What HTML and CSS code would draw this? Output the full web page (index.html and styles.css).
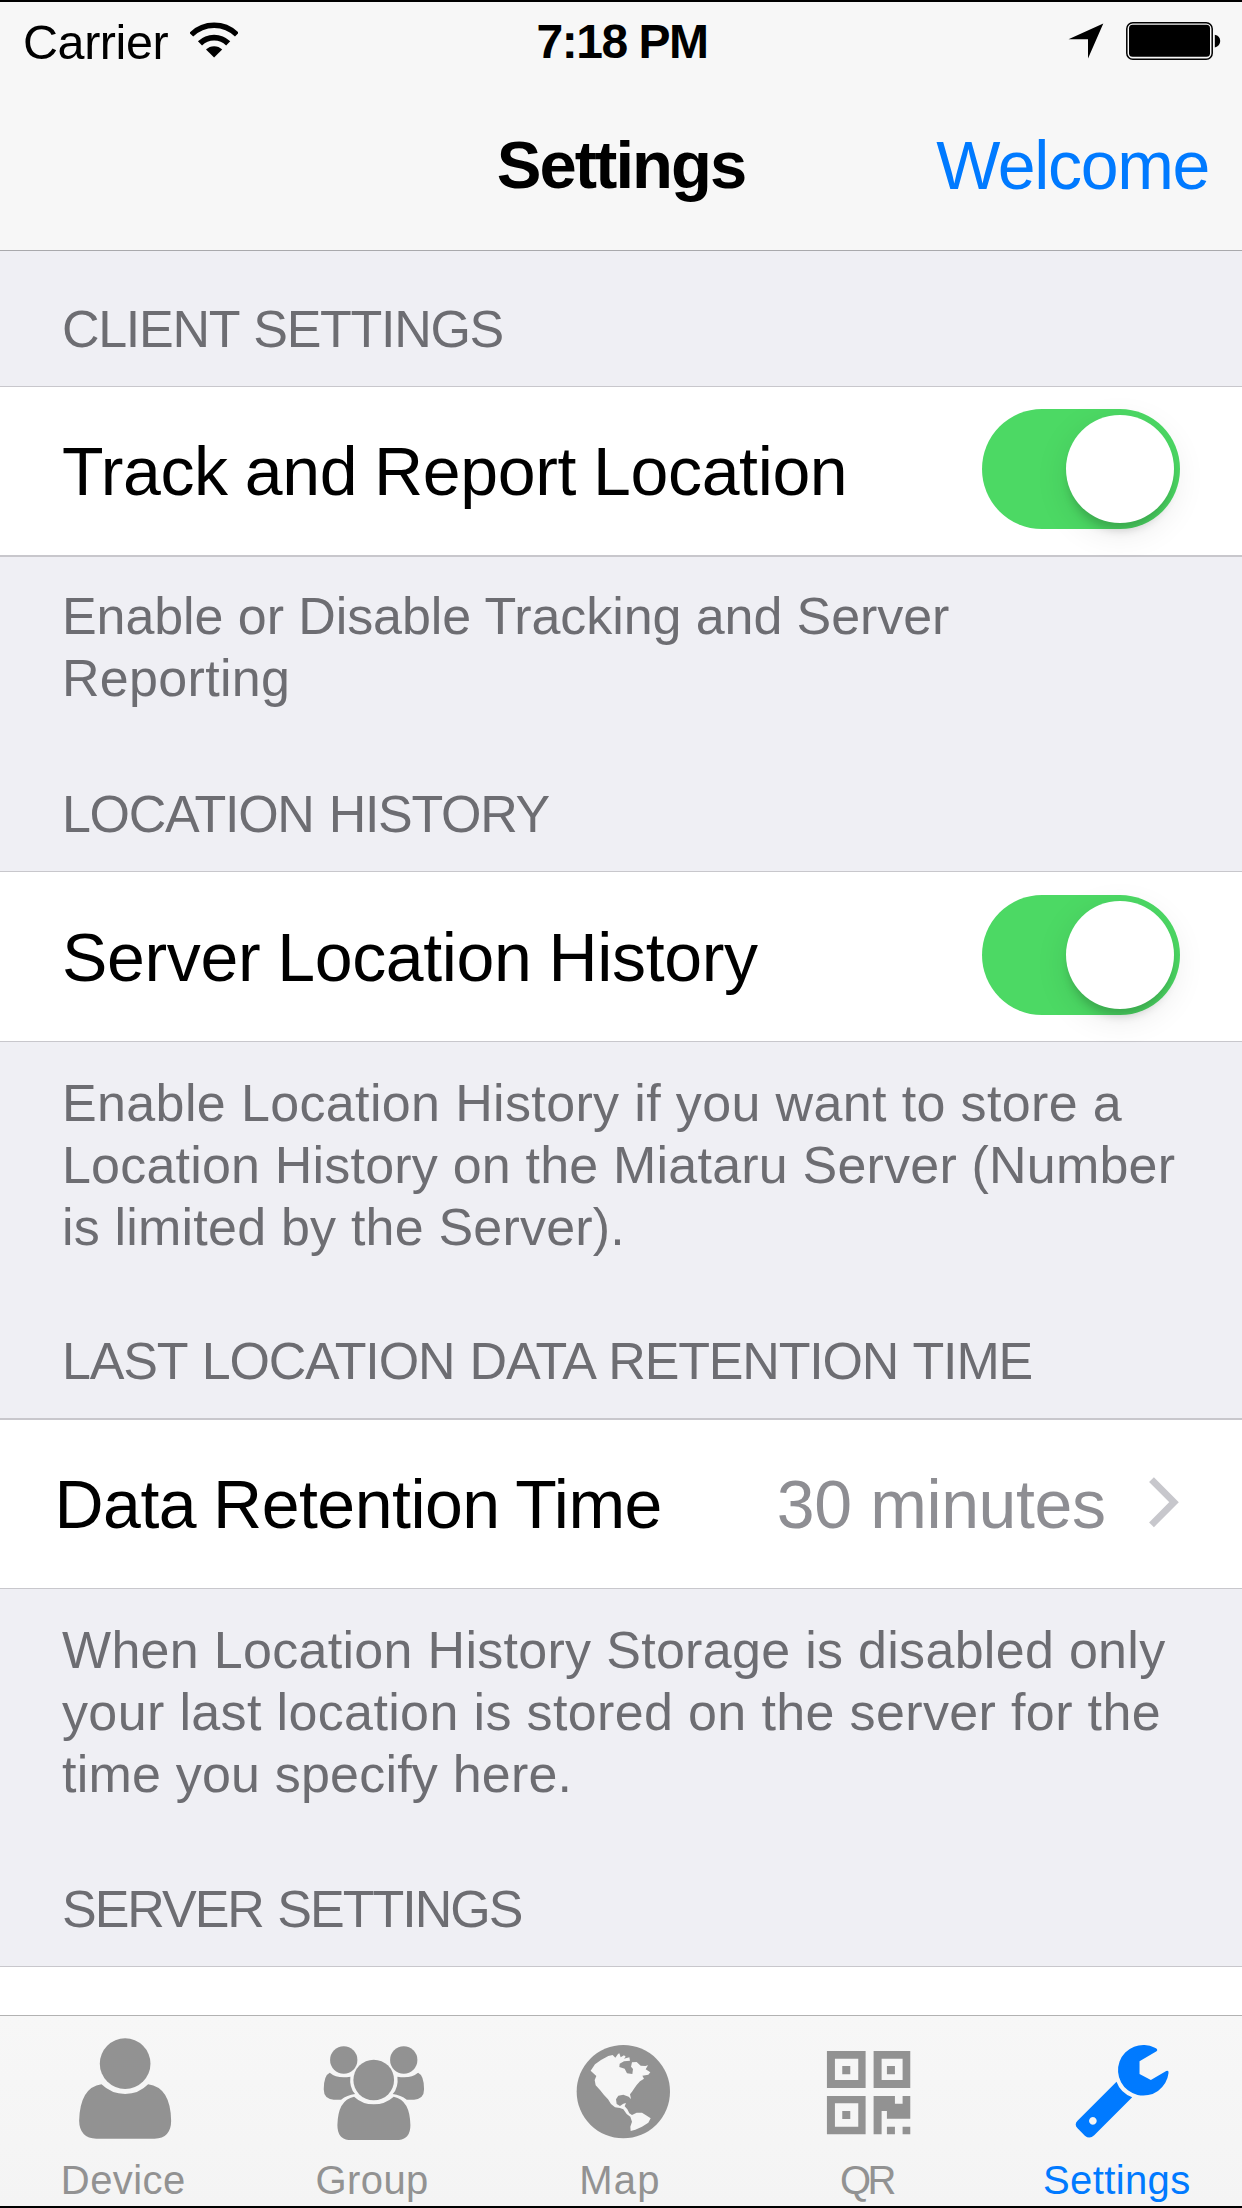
FILE: index.html
```
<!DOCTYPE html>
<html lang="en">
<head>
<meta charset="utf-8">
<title>Settings</title>
<link rel="stylesheet" href="styles.css">
</head>
<body>
<div class="screen">
  <header class="top">
    <div class="status">
      <div class="status-left">
        <span class="carrier">Carrier</span>
        <svg class="wifi" viewBox="0 0 48 36" width="48" height="36">
          <path d="M1.4 12.7A32.2 32.2 0 0 1 47 12.7" transform="translate(-.1 0)" fill="none" stroke="#000" stroke-width="5.4"/>
          <path d="M10 21.4A20 20 0 0 1 38.2 21.4" fill="none" stroke="#000" stroke-width="5.8"/>
          <path d="M16 27.6A11.5 11.5 0 0 1 32.2 27.6L24.1 35.6Z"/>
        </svg>
      </div>
      <span class="clock">7:18 PM</span>
      <div class="status-right">
        <svg viewBox="0 0 36 36" width="36" height="36"><path d="M35.3 0.5L20 35.5V16.3H0.5Z"/></svg>
        <svg viewBox="0 0 95 38" width="95" height="38">
          <rect x="0.8" y="0.8" width="85.4" height="36.4" rx="6" fill="none" stroke="#000" stroke-width="1.5"/>
          <rect x="3" y="2.8" width="81" height="32" rx="3.5"/>
          <path d="M88.8 12.8Q94.2 14 94.2 19T88.8 25.4Z"/>
        </svg>
      </div>
    </div>
    <nav class="nav">
      <h1 class="title">Settings</h1>
      <a class="welcome">Welcome</a>
    </nav>
  </header>

  <main class="list">
    <h2 class="section">Client Settings</h2>
    <div class="row row-first">
      <span class="label track">Track and Report Location</span>
      <span class="switch"><span class="knob"></span></span>
    </div>
    <p class="note note-first"><span class="snug">Enable or Disable Tracking and Server</span><br>Reporting</p>

    <h2 class="section">Location History</h2>
    <div class="row">
      <span class="label">Server Location History</span>
      <span class="switch"><span class="knob"></span></span>
    </div>
    <p class="note"><span class="wide">Enable Location History if you want to store a</span><br><span class="even">Location History on the Miataru Server (Number<br>is limited by the Server).</span></p>

    <h2 class="section retain">Last Location Data Retention Time</h2>
    <div class="row row-detail">
      <span class="label retention">Data Retention Time</span>
      <span class="detail">
        <span class="value">30 minutes</span>
        <svg viewBox="0 0 32 52" width="32" height="52"><path d="M3.5 3.6L26 26.2L3.5 48.8" fill="none" stroke="#c7c7cc" stroke-width="6.8"/></svg>
      </span>
    </div>
    <p class="note note-last">When Location History Storage is disabled only<br><span class="wide">your last location is stored on the server for the</span><br><span class="even">time you specify here.</span></p>

    <h2 class="section server">Server Settings</h2>
    <div class="row row-cut"></div>
  </main>

  <footer class="tabs">
    <div class="tab">
      <svg viewBox="192.6 102 360 324" width="120" height="108">
        <circle cx="376" cy="191" r="76"/>
        <path d="M305 253Q335 282 376 282T445 253Q512 262 514 362Q514 414 464 416H290Q239 414 238 362Q241 262 305 253Z"/>
      </svg>
      <span class="device">Device</span>
    </div>
    <div class="tab">
      <svg viewBox="937.8 102 360 324" width="120" height="108">
        <circle cx="1030" cy="180" r="41"/>
        <circle cx="1210" cy="180" r="41"/>
        <path d="M988 218Q1010 237 1050 230Q1046 262 1064 282Q1040 285 1022 299H1000Q970 297 970 268Q970 226 988 218Z"/>
        <path d="M1253 218Q1231 237 1191 230Q1195 262 1177 282Q1201 285 1219 299H1241Q1271 297 1271 268Q1271 226 1253 218Z"/>
        <circle cx="1120" cy="240" r="61"/>
        <path d="M1061 290Q1086 313 1120 313T1180 290Q1229 300 1230 376Q1230 416 1196 420H1044Q1011 416 1011 376Q1012 300 1061 290Z"/>
      </svg>
      <span class="group">Group</span>
    </div>
    <div class="tab">
      <svg viewBox="63 102 360 324" width="120" height="108">
        <circle cx="250" cy="275" r="140"/>
        <path class="land" d="M152 212L165 193L183 180L205 168L218 165L226 173L234 162L238 160L242 172L252 166L257 170L252 176L268 172L270 182L252 184L239 191L238 201L254 206L261 220L277 222L279 207L273 200L276 187L290 186L302 197L316 198L324 196L317 208L331 217L325 224L307 227L312 236L300 244L290 255L282 266L276 275L270 283L273 297L266 290L250 284L235 287L228 298L230 312L240 318L250 311L258 309L254 319L262 328L268 340L276 345L290 338L306 338L318 346L332 355L325 368L306 380L286 389L272 393L271 380L276 365L271 350L260 342L250 328L240 324L225 322L213 312L204 298L192 285L180 270L167 256L164 240L169 228L160 220Z"/>
      </svg>
      <span class="map">Map</span>
    </div>
    <div class="tab">
      <svg viewBox="808.2 102 360 324" width="120" height="108">
        <path fill-rule="evenodd" d="M862 153H978V264H862ZM886 176V240H956V176ZM1002 153H1112V264H1002ZM1026 176V240H1089V176ZM862 288H978V403H862ZM886 310V380H956V310ZM908 198H932V223H908ZM1042 198H1066V223H1042ZM908 333H932V357H908Z"/>
        <path d="M1002 288H1066V311H1089V288H1112V356H1042V333H1026V403H1002ZM1042 380H1066V403H1042ZM1089 380H1112V403H1089Z"/>
      </svg>
      <span class="qr">QR</span>
    </div>
    <div class="tab tab-active">
      <svg viewBox="353.4 102 360 324" width="120" height="108">
        <path d="M649 154L598 184V222L632 240L678 213Q686 210 685 219A76 76 0 1 1 644 143Q655 148 649 154Z"/>
        <path fill-rule="evenodd" d="M529 245Q540 277 576 292L462 406Q448 419 434 407L412 385Q401 373 412 362ZM458 351A11.5 11.5 0 1 0 458.1 351Z"/>
      </svg>
      <span class="device">Settings</span>
    </div>
  </footer>
</div>
</body>
</html>
```
FILE: styles.css
```
* {
  box-sizing: border-box;
}

body {
  margin: 0;
  font-family: "Liberation Sans", Arial, sans-serif;
  color: #000;
}

h1, h2, p {
  margin: 0;
  font-weight: normal;
}

svg {
  display: block;
  flex: none;
}

.screen {
  display: flex;
  flex-direction: column;
  width: 1242px;
  height: 2208px;
  overflow: hidden;
  border-top: 2px solid #000;
  border-bottom: 2px solid #000;
  background: #efeff4;
  white-space: nowrap;
}

.top {
  flex: none;
  height: 249px;
  background: #f7f7f7;
  border-bottom: 1px solid #a9a9ac;
}

.status {
  display: grid;
  grid-template-columns: 1fr auto 1fr;
  align-items: center;
  height: 80px;
  padding: 0 21px 0 23px;
  font-size: 48.5px;
  line-height: 80px;
}

.status-left,
.status-right {
  display: flex;
  align-items: center;
}

.status-left {
  gap: 22px;
}

.status-right {
  justify-content: flex-end;
  gap: 22px;
}

.status-right svg {
  margin-bottom: 2px;
}

.wifi {
  margin-bottom: 5px;
}

.carrier {
  letter-spacing: -0.425px;
}

.clock {
  font-size: 48px;
  font-weight: bold;
  letter-spacing: -1.5px;
}

.nav {
  display: grid;
  grid-template-columns: 1fr auto 1fr;
  height: 166px;
  padding: 0 33px;
  font-size: 68px;
  line-height: 166px;
}

.title {
  grid-column: 2;
  font-size: 67px;
  font-weight: bold;
  letter-spacing: -2px;
}

.welcome {
  justify-self: end;
  color: #007aff;
  letter-spacing: -1.34px;
}

.list {
  flex: 1;
  min-height: 0;
  overflow: hidden;
}

.section {
  height: 135px;
  padding: 47px 62px 0;
  color: #6d6d72;
  font-size: 52px;
  line-height: 62px;
  letter-spacing: -1.3px;
  word-spacing: 2px;
  text-transform: uppercase;
}

.section.retain {
  letter-spacing: -1.17px;
}

.section.server {
  letter-spacing: -2px;
}

.row {
  display: flex;
  align-items: center;
  justify-content: space-between;
  height: 171px;
  padding: 0 62px;
  background: #fff;
  border-top: 1px solid #c8c7cc;
  border-bottom: 1px solid #c8c7cc;
  font-size: 68px;
}

.row-first {
  border-bottom-width: 2px;
}

.row-detail {
  border-top-width: 2px;
  padding-left: 54.5px;
}

.row-cut {
  border-bottom: 0;
}

.label {
  letter-spacing: -0.35px;
  word-spacing: -1.5px;
}

.label.track {
  letter-spacing: -0.36px;
}

.label.retention {
  letter-spacing: -0.5px;
}

.detail {
  display: flex;
  align-items: center;
  gap: 42.5px;
}

.detail svg {
  margin-bottom: 4px;
}

.value {
  color: #8e8e93;
  letter-spacing: -0.4px;
}

.switch {
  width: 198px;
  height: 120px;
  margin-bottom: 4px;
  padding: 6px 6px 6px 84px;
  border-radius: 60px;
  background: #4cd964;
}

.knob {
  display: block;
  width: 108px;
  height: 108px;
  border-radius: 50%;
  background: #fff;
  box-shadow: 0 10px 10px -3px rgba(0, 0, 0, 0.17), 0 9px 34px rgba(0, 0, 0, 0.09);
}

.note {
  height: 241px;
  padding: 30px 62px 0;
  color: #6d6d72;
  font-size: 52px;
  line-height: 62px;
  letter-spacing: 0.3px;
}

.note-first {
  height: 179px;
  padding-top: 28px;
}

.note-last {
  height: 242px;
}

.snug {
  letter-spacing: -0.08px;
}

.even {
  letter-spacing: 0.2px;
}

.wide {
  letter-spacing: 0.36px;
}

.tabs {
  flex: none;
  display: grid;
  grid-template-columns: repeat(5, 1fr);
  height: 191px;
  border-top: 1px solid #b2b2b2;
  background: linear-gradient(#f7f7f7, #f4f4f4);
  color: #929292;
  fill: #929292;
}

.tab {
  display: flex;
  flex-direction: column;
  align-items: center;
  padding-top: 18px;
  font-size: 40px;
  line-height: 50px;
  letter-spacing: 0.4px;
}

.tab span {
  margin-top: 13px;
}

.tab-active {
  color: #007aff;
  fill: #007aff;
}

.land {
  fill: #f6f6f6;
}

.device {
  padding-right: 2px;
}

.group {
  padding-right: 1px;
}

.map {
  padding-right: 2px;
  letter-spacing: 1.2px;
}

.qr {
  padding-right: 6px;
  letter-spacing: -3.6px;
}
```
